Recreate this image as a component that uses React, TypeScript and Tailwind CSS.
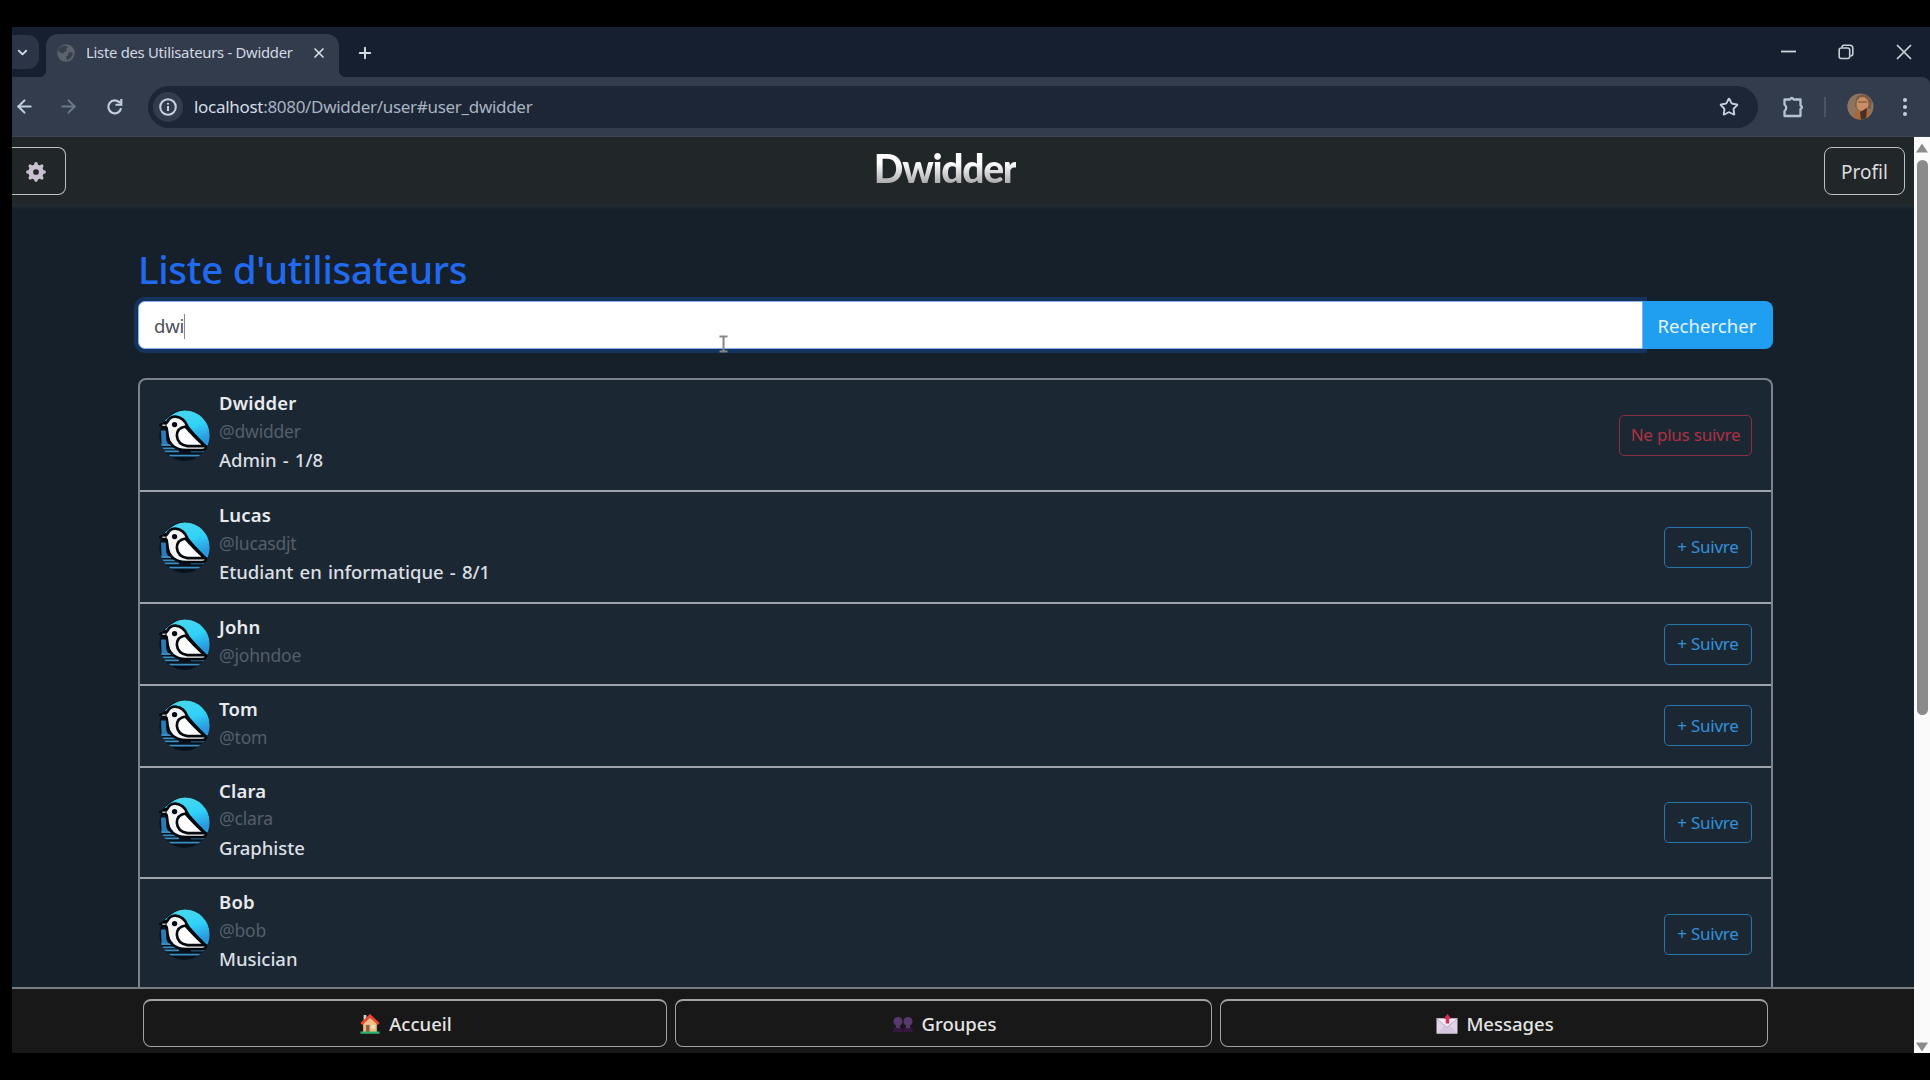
import React from "react";
import { ArrowLeft, ArrowRight, ChevronDown, Plus, X, Star } from "lucide-react";

type User = { name: string; handle: string; bio?: string; followed?: boolean; h: string };

const users: User[] = [
  { name: "Dwidder", handle: "@dwidder", bio: "Admin - 1/8", followed: true, h: "h-[112px]" },
  { name: "Lucas", handle: "@lucasdjt", bio: "Etudiant en informatique - 8/1", h: "h-[112px]" },
  { name: "John", handle: "@johndoe", h: "h-[82px]" },
  { name: "Tom", handle: "@tom", h: "h-[81.5px]" },
  { name: "Clara", handle: "@clara", bio: "Graphiste", h: "h-[111.5px]" },
  { name: "Bob", handle: "@bob", bio: "Musician", h: "h-[112px]" },
];

function Bird() {
  return (
    <svg viewBox="30 30 154 154" className="ml-[19px] size-[51px] shrink-0">
      <defs>
        <linearGradient id="sky" x1="0" y1="0" x2="0.4" y2="1">
          <stop offset="0" stopColor="#4fd8ea" />
          <stop offset="0.6" stopColor="#2fd2f8" />
          <stop offset="1" stopColor="#2a98dd" />
        </linearGradient>
        <clipPath id="disc">
          <circle cx="107" cy="107" r="76" />
        </clipPath>
      </defs>
      <g clipPath="url(#disc)">
        <rect x="30" y="30" width="154" height="154" fill="#07111c" />
        <path d="M48 62 Q75 34 107 31 Q184 34 184 107 L184 138 L168 136 L120 84 Q112 54 82 48 Q62 48 52 64Z" fill="url(#sky)" />
        <path d="M36 92 H52 V122 Q56 134 64 138 H38Z" fill="#2a7db4" />
        <path d="M38 136 H66 M40 146 H84 M46 155 H88 M128 155 H172 M60 168 H156" stroke="#3c8fc0" strokeWidth="5" strokeLinecap="round" fill="none" />
        <path d="M68 178 H150" stroke="#07111c" strokeWidth="9" />
      </g>
      <path d="M34 75 L54 68 Q62 49 80 50 Q105 52 115 78 Q122 92 170 139 Q176 149 160 151 H112 Q58 150 55 98 L53 84Z" fill="#f4f4f4" stroke="#05080d" strokeWidth="8" strokeLinejoin="round" />
      <path d="M33 74 L53 69 V84Z" fill="#05080d" />
      <path d="M40 76 H50" stroke="#c5cbd0" strokeWidth="4" />
      <path d="M110 80 Q84 84 84 108 Q86 134 116 139 H168 Q134 108 110 80Z" fill="#fff" stroke="#05080d" strokeWidth="8" strokeLinejoin="round" />
      <circle cx="77" cy="74" r="8" fill="#05080d" />
    </svg>
  );
}

function TabStrip() {
  return (
    <div className="flex h-[50px] items-end bg-[#151f2f]">
      <div className="mb-[8px] flex h-[34px] w-[27px] items-center justify-center rounded-r-[11px] bg-[#2b3547]">
        <ChevronDown size={15} strokeWidth={3} className="-ml-[6px] text-[#d4dae4]" />
      </div>
      <div className="flex h-[43px] w-[307px] items-end">
        <div className="size-[7px] bg-[radial-gradient(circle_at_0_0,#151f2f_7px,#333c4c_7.5px)]" />
        <div className="flex h-full w-[293px] items-center rounded-t-[12px] bg-[#333c4c] pb-[6px] pl-[11px]">
          <svg width="18" height="18" viewBox="0 0 18 18">
            <circle cx="9" cy="9" r="8.7" fill="#5d636c" />
            <path d="M6 2 Q10 1 11 3 L9 5 L10 7 L7 8 Q7 10 4 9 L1 7 Q2 3 6 2Z M12 8 Q16 8 16 10 Q14 15 10 16 L9 13 L11 11Z" fill="#363f4c" />
          </svg>
          <span className="ml-[11px] w-[208px] whitespace-nowrap text-[14.800px] tracking-[-0.260px] text-[#d3d9e3]">Liste des Utilisateurs - Dwidder</span>
          <X size={16} strokeWidth={2.6} className="ml-[17px] text-[#d4dae4]" />
        </div>
        <div className="size-[7px] bg-[radial-gradient(circle_at_100%_0,#151f2f_7px,#333c4c_7.5px)]" />
      </div>
      <Plus size={18} strokeWidth={2.6} className="mb-[15px] ml-[10px] text-[#d4dae4]" />
      <div className="ml-auto mb-[16px] flex items-center">
        <svg width="15" height="18" className="mr-[42px]"><path d="M0 8.500H15" stroke="#d0d4da" strokeWidth="1.8" /></svg>
        <svg width="16" height="16" viewBox="0 0 16 16" fill="none" stroke="#c9ced6" strokeWidth="1.6" className="mr-[42px]">
          <rect x="1.2" y="4" width="10.5" height="10.5" rx="2" />
          <path d="M4 3.5Q4 1.3 6 1.3H12Q14.8 1.3 14.8 4V9.500Q14.800 12 12.500 12" />
        </svg>
        <svg width="16" height="16" viewBox="0 0 16 16" className="mr-[18px]"><path d="M1 1L15 15M15 1L1 15" stroke="#d0d4da" strokeWidth="1.7" /></svg>
      </div>
    </div>
  );
}

function Toolbar() {
  return (
    <div className="flex h-[60px] items-center rounded-tr-[8px] border-b border-[#3d4653] bg-[#333c4c]">
      <ArrowLeft size={21} strokeWidth={2.4} className="ml-[2px] text-[#c3cedf]" />
      <ArrowRight size={21} strokeWidth={2.4} className="ml-[23px] text-[#6c7788]" />
      <svg width="18" height="18" viewBox="0 0 20 20" fill="none" stroke="#c3cedf" strokeWidth="2.4" className="mr-px ml-[27px]">
        <path d="M16.800 11.500A7.200 7.200 0 1 1 15.300 5.200" />
        <path d="M17 1V7.500H10.500" />
        <path d="M13 4 L16 7 V3Z" fill="#c3cedf" stroke="none" />
      </svg>
      <div className="ml-[23px] flex h-[42px] w-[1610px] items-center rounded-full bg-[#1c2636]">
        <div className="ml-[5px] flex size-[30px] items-center justify-center rounded-full bg-[#323c4c]">
          <svg width="18" height="18" viewBox="0 0 18 18" fill="none" stroke="#c9d2e0" strokeWidth="2">
            <circle cx="9" cy="9" r="7.800" />
            <path d="M9 8V13M9 5V6.500" />
          </svg>
        </div>
        <span className="mt-px ml-[11px] whitespace-nowrap text-[17px] tracking-[-0.3px] text-[#aab3c1]"><span className="text-[#d5dce6]">localhost</span>:8080/Dwidder/user#user_dwidder</span>
        <Star size={20} strokeWidth={2.3} className="mr-[19px] ml-auto text-[#c3cedf]" />
      </div>
      <svg width="24" height="24" viewBox="0 0 24 24" fill="none" stroke="#b4c2d6" strokeWidth="2.300" strokeLinejoin="round" className="ml-[23px]">
        <path d="M3.500 4.500H9Q10.800 1.500 12.600 4.500H19.500V10.500Q22.500 12.200 19.500 14V21H3.500V16Q7 12.700 3.500 9.500Z" />
      </svg>
      <div className="ml-[19px] h-[20px] w-[2px] bg-[#4a5465]" />
      <svg width="27" height="27" viewBox="0 0 27 27" className="ml-[21px]">
        <clipPath id="face"><circle cx="13.500" cy="13.500" r="13" /></clipPath>
        <g clipPath="url(#face)">
          <rect width="27" height="27" fill="#8a7464" />
          <rect width="10" height="27" fill="#8e735e" />
          <path d="M9 5Q16 -3 25 6L24 16L8 14Z" fill="#7d5c44" />
          <ellipse cx="15.500" cy="11" rx="6" ry="7" fill="#c98e66" />
          <path d="M11 9H20" stroke="#8f5f42" strokeWidth="1.500" />
          <path d="M6 27L10 16L15 19L20 14L25 27Z" fill="#a8683e" />
          <path d="M13 19L20 15L19 27H14Z" fill="#4c2f24" />
        </g>
      </svg>
      <div className="ml-[29px] flex flex-col gap-[3px]">
        <i className="size-[4px] rounded-full bg-[#c3cedf]" />
        <i className="size-[4px] rounded-full bg-[#c3cedf]" />
        <i className="size-[4px] rounded-full bg-[#c3cedf]" />
      </div>
    </div>
  );
}

function Gear() {
  return (
    <svg width="20" height="20" viewBox="-10.5 -10.5 21 21" className="mt-[2px] ml-[14px]">
      <circle r="5.500" fill="none" stroke="#c9c1d2" strokeWidth="5" />
      <path d="M0-8.500V-7M0 7V8.500M-8.500 0H-7M7 0H8.500M-6-6L-5-5M5 5L6 6M-6 6L-5 5M5-5L6-6" stroke="#c9c1d2" strokeWidth="3.800" strokeLinecap="round" />
    </svg>
  );
}

function House() {
  return (
    <svg width="20" height="20" viewBox="0 0 21 22" className="mr-[9px]">
      <path d="M3.500 1H6.500V6L3.500 9Z" fill="#cfd2d4" />
      <path d="M3 10L10.500 4L18 10V20H3Z" fill="#efc184" />
      <path d="M1 11L10.500 2L20 11" fill="none" stroke="#ee4632" strokeWidth="3" />
      <rect x="6" y="12" width="4" height="8" fill="#9c5a44" />
      <rect x="12" y="12" width="4" height="4" fill="#e8e0d0" />
      <path d="M0 20.500H21" stroke="#2fb06a" strokeWidth="2.500" />
    </svg>
  );
}

function People() {
  return (
    <svg width="20" height="20" viewBox="0 0 20 20" className="mr-[9px]">
      <path d="M0 18Q0 12.500 5 12.500T10 18Q10 12.500 15 12.500T20 18Z" fill="#35173f" />
      <circle cx="5" cy="7.500" r="4.500" fill="#573a6b" />
      <circle cx="15" cy="7.500" r="4.500" fill="#573a6b" />
      <path d="M3 9H7V14H3ZM13 9H17V14H13Z" fill="#573a6b" />
    </svg>
  );
}

function Mail() {
  return (
    <svg width="22" height="20" viewBox="0 0 22 21" className="mr-[8px]">
      <rect y="4.500" width="22" height="16" fill="#e2d5e8" />
      <path d="M0 20.500L8.500 12H13.500L22 20.500Z" fill="#d5c5de" />
      <path d="M0 5L11 14L22 5" fill="#f0e8f3" stroke="#b7a6c2" strokeWidth="1" />
      <path d="M11.500 0L15.500 5H13.300V10H9.700V5H7.500Z" fill="#cf2f55" />
    </svg>
  );
}

function UserRow({ user }: { user: User }) {
  return (
    <li className={`flex shrink-0 items-center border-b-2 border-[#a0a5ad] ${user.h}`}>
      <Bird />
      <div className="ml-[9px] self-start pt-[8px] text-[18.500px] whitespace-nowrap">
        <div className="h-[28.500px] leading-[29px] font-semibold tracking-[0.2px] text-[#e9ebee]">{user.name}</div>
        <div className="h-[28.500px] text-[17.500px] leading-[28px] tracking-[-0.2px] text-[#565e69]">{user.handle}</div>
        {user.bio && <div className="h-[29px] leading-[29px] font-medium tracking-[-0.05px] text-[#dcdfe3] [word-spacing:1.5px]">{user.bio}</div>}
      </div>
      {user.followed ? (
        <button className="mr-[19px] ml-auto flex h-[41px] w-[133px] items-center justify-center rounded-[5px] border-[1.500px] border-[#8b2f42] text-[17px] tracking-[-0.22px] whitespace-nowrap text-[#b22f42]">Ne plus suivre</button>
      ) : (
        <button className="mr-[19px] ml-auto flex h-[41px] w-[88px] items-center justify-center rounded-[5px] border-[1.500px] border-[#2876ad] text-[17px] tracking-[-0.25px] whitespace-nowrap text-[#3390da]">+ Suivre</button>
      )}
    </li>
  );
}

const navButton = "flex h-[48px] items-center justify-center rounded-[8px] border-[1.500px] border-t-2 border-[#a3a1a1] pt-px pl-[2px] text-[18.500px] tracking-[0px] font-medium text-[#e4e4e4]";

export default function App() {
  return (
    <div className="h-[1080px] w-[1930px] overflow-hidden bg-black pt-[27px] pl-[12px] font-['Noto_Sans','Open_Sans',sans-serif]">
      <div className="flex h-[1026px] flex-col overflow-hidden bg-[#151f2f]">
        <TabStrip />
        <Toolbar />
        <div className="flex h-[916px]">
          <div className="relative flex w-[1902px] flex-col bg-[#16202a]">
            <header className="flex h-[67px] shrink-0 items-center justify-between bg-[#212628]">
              <button className="flex h-[48px] w-[54px] items-center rounded-r-[8px] border-[1.500px] border-l-0 border-[#c0c0c2]"><Gear /></button>
              <div className="mt-[-6px] bg-gradient-to-b from-white from-40% to-[#a5a5a7] to-85% bg-clip-text font-['Lato'] text-[39px] leading-[48px] font-black tracking-[-1.300px] text-transparent">Dwidder</div>
              <button className="mr-[9px] flex h-[48px] w-[81px] items-center justify-center rounded-[8px] border-[1.500px] border-[#c0c0c2] pt-[3px] text-[19px] tracking-[0px] text-[#dcdddf]">Profil</button>
            </header>
            <div className="h-[6px] shrink-0 bg-gradient-to-b from-[#222c34] to-[#16202a]" />
            <main className="flex min-h-0 flex-1 flex-col overflow-hidden pr-[141px] pl-[126px]">
              <h1 className="mt-[31px] h-[60px] text-[38.500px] leading-[56px] font-medium tracking-[-0.3px] text-[#216af0]">Liste d'utilisateurs</h1>
              <div className="flex h-[48px] shrink-0">
                <div className="flex flex-1 items-center rounded-l-[7px] border border-[#86b0ee] bg-white pt-[2px] pl-[15px] text-[18.500px] tracking-[-0.2px] text-[#4b5056] shadow-[0_0_0_4px_#14335f]">
                  dwi<span className="h-[25px] w-px bg-[#888]" />
                </div>
                <button className="relative flex w-[130px] items-center justify-center rounded-r-[8px] bg-[#209ff0] pt-[2px] pr-[2px] text-[18.500px] tracking-[0.05px] text-[#e4f5ff]">Rechercher</button>
              </div>
              <ul className="mt-[29px] flex flex-1 flex-col overflow-hidden rounded-t-[8px] border-2 border-b-0 border-[#7c828b] bg-[#1b2834]">
                {users.map((u) => <UserRow key={u.handle} user={u} />)}
              </ul>
            </main>
            <footer className="flex h-[66px] shrink-0 gap-[8px] border-t-2 border-[#777c84] bg-[#181818] pt-[10px] pl-[131px]">
              <button className={`${navButton} w-[524px]`}><House />Accueil</button>
              <button className={`${navButton} w-[537px]`}><People />Groupes</button>
              <button className={`${navButton} w-[548px]`}><Mail />Messages</button>
            </footer>
            <svg width="9" height="18" viewBox="0 0 9 18" className="absolute top-[198px] left-[707px]">
              <path d="M0.500 1.500H8.500M0.500 16.500H8.500M4.500 1.500V16.500" stroke="#85858a" strokeWidth="2" />
            </svg>
          </div>
          <div className="flex w-[16px] flex-col items-center bg-[#fafafa] pt-[6px]">
            <svg width="12" height="10"><path d="M6 0.500L12 9.500H0Z" fill="#8b8b8b" /></svg>
            <div className="mt-[7px] h-[555px] w-[11px] rounded-full bg-[#8a8a8a]" />
            <svg width="12" height="10" className="mt-auto mb-[1px]"><path d="M0 0.500H12L6 9.500Z" fill="#8b8b8b" /></svg>
          </div>
        </div>
      </div>
    </div>
  );
}
